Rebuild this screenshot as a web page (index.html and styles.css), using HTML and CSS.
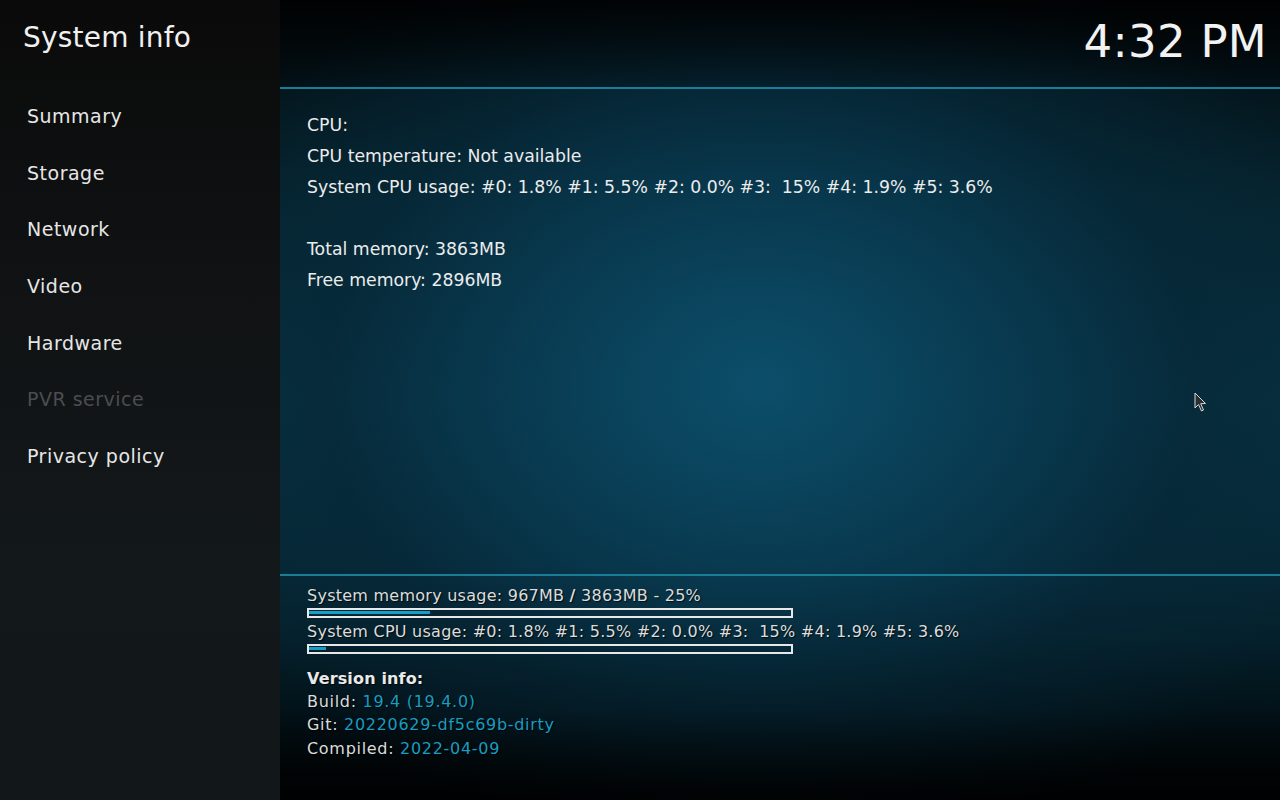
FILE: index.html
```html
<!DOCTYPE html>
<html>
<head>
<meta charset="utf-8">
<link rel="stylesheet" href="styles.css">
</head>
<body>
<div class="app">
  <aside class="sidebar">
    <h1 class="title">System info</h1>
    <ul class="menu">
      <li class="item">Summary</li>
      <li class="item">Storage</li>
      <li class="item">Network</li>
      <li class="item">Video</li>
      <li class="item">Hardware</li>
      <li class="item disabled">PVR service</li>
      <li class="item">Privacy policy</li>
    </ul>
  </aside>
  <main class="main">
    <header class="header">
      <div class="clock">4:32 PM</div>
    </header>
    <section class="content">
      <div class="line">CPU:</div>
      <div class="line">CPU temperature: Not available</div>
      <div class="line">System CPU usage: #0: 1.8% #1: 5.5% #2: 0.0% #3: &nbsp;15% #4: 1.9% #5: 3.6%</div>
      <div class="line blank"></div>
      <div class="line">Total memory: 3863MB</div>
      <div class="line">Free memory: 2896MB</div>
    </section>
    <footer class="footer">
      <div class="stat">System memory usage: 967MB <b class="slash">/</b> 3863MB - 25%</div>
      <div class="bar"><div class="fill" style="width:25%"></div></div>
      <div class="stat">System CPU usage: #0: 1.8% #1: 5.5% #2: 0.0% #3: &nbsp;15% #4: 1.9% #5: 3.6%</div>
      <div class="bar"><div class="fill" style="width:3.5%"></div></div>
      <div class="version">
        <div class="vhead">Version info:</div>
        <div class="vline">Build: <span class="val">19.4 (19.4.0)</span></div>
        <div class="vline">Git: <span class="val">20220629-df5c69b-dirty</span></div>
        <div class="vline">Compiled: <span class="val">2022-04-09</span></div>
      </div>
    </footer>
    <svg class="cursor" width="14" height="21" viewBox="0 0 14 21">
      <path d="M1 1 L1 16 L4.5 12.5 L7.5 19 L9.5 18 L6.7 11.7 L11.5 11.5 Z" fill="#2a2f33" stroke="#d8d8d8" stroke-width="1" stroke-linejoin="round"/>
    </svg>
  </main>
</div>
</body>
</html>
```
FILE: styles.css
```css
html, body {
  margin: 0;
  padding: 0;
  width: 1280px;
  height: 800px;
  overflow: hidden;
  background: #000;
  font-family: "DejaVu Sans", "Liberation Sans", sans-serif;
  color: #e8e8e8;
}
.app {
  display: flex;
  width: 1280px;
  height: 800px;
}
.sidebar {
  width: 280px;
  flex: none;
  background: linear-gradient(180deg, #0a0a0a 0%, #101213 35%, #13181a 70%, #121719 100%);
  display: flex;
  flex-direction: column;
}
.title {
  margin: 0;
  padding: 19px 0 0 23px;
  font-size: 28px;
  font-weight: normal;
  color: #f0f0f0;
  line-height: 37px;
  letter-spacing: 0.2px;
}
.menu {
  list-style: none;
  margin: 0;
  padding: 50px 0 0 27px;
}
.item {
  font-size: 19px;
  height: 56.7px;
  line-height: 20px;
  color: #e6e6e6;
  letter-spacing: 0.5px;
}
.item.disabled {
  color: #4a4d50;
}
.main {
  flex: 1;
  position: relative;
  display: flex;
  flex-direction: column;
  background:
    radial-gradient(ellipse 620px 480px at 48% 48%, rgba(12,78,106,1) 0%, rgba(9,62,86,0.9) 35%, rgba(6,40,56,0.7) 70%, rgba(3,20,28,0) 100%),
    linear-gradient(180deg, #020a0e 0%, #06242f 25%, #083242 50%, #052330 80%, #010608 100%);
}
.header {
  height: 87px;
  border-bottom: 2px solid #1c7d96;
  display: flex;
  justify-content: flex-end;
  background: linear-gradient(180deg, rgba(0,0,0,0.85) 0%, rgba(0,0,0,0.2) 100%);
}
.clock {
  font-size: 45px;
  line-height: 48px;
  padding: 18px 13px 0 0;
  color: #f2f2f2;
  letter-spacing: 0.3px;
}
.content {
  flex: 1;
  padding: 21px 0 0 27px;
  border-bottom: 2px solid #1a7c95;
}
.line {
  font-size: 17.3px;
  line-height: 31px;
  height: 31px;
  color: #ececec;
}
.footer {
  height: 224px;
  padding: 9px 0 0 27px;
  box-sizing: border-box;
  background: linear-gradient(180deg, rgba(0,0,0,0) 0%, rgba(0,0,0,0.2) 60%, rgba(0,0,0,0.85) 100%);
  text-shadow: 1px 1px 1px rgba(0,0,0,0.7);
}
.stat {
  font-size: 16px;
  line-height: 21px;
  height: 21px;
  color: #dcdcdc;
  letter-spacing: 0.25px;
}
.slash {
  font-weight: bold;
}
.bar {
  width: 482px;
  height: 6px;
  border: 2px solid #e8e8e8;
  margin: 2px 0 3px 0;
}
.bar .fill {
  height: 3px;
  margin-top: 1px;
  background: #12a0c8;
}
.version {
  padding-top: 10px;
}
.vhead {
  font-weight: bold;
  font-size: 16px;
  line-height: 23px;
  color: #eaeaea;
  letter-spacing: 0.15px;
}
.vline {
  font-size: 16px;
  line-height: 23.3px;
  color: #dcdcdc;
  letter-spacing: 0.7px;
}
.val {
  color: #1a9cc0;
}
.cursor {
  position: absolute;
  left: 914px;
  top: 392px;
}
```
